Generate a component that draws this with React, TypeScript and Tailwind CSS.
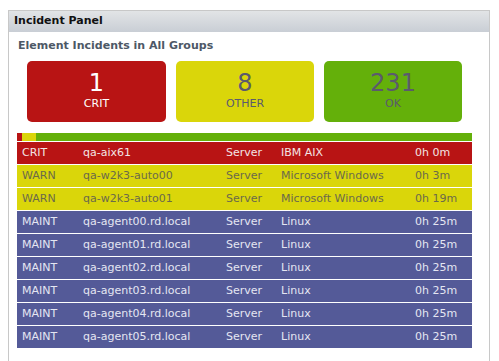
const rows = [
  { s: "CRIT", n: "qa-aix61", t: "Server", os: "IBM AIX", d: "0h 0m", c: "bg-[#b81414] text-[#f3e4e4]" },
  { s: "WARN", n: "qa-w2k3-auto00", t: "Server", os: "Microsoft Windows", d: "0h 3m", c: "bg-[#dad60a] text-[#6b6a4a]" },
  { s: "WARN", n: "qa-w2k3-auto01", t: "Server", os: "Microsoft Windows", d: "0h 19m", c: "bg-[#dad60a] text-[#6b6a4a]" },
  { s: "MAINT", n: "qa-agent00.rd.local", t: "Server", os: "Linux", d: "0h 25m", c: "bg-[#545a98] text-[#e4e6f2]" },
  { s: "MAINT", n: "qa-agent01.rd.local", t: "Server", os: "Linux", d: "0h 25m", c: "bg-[#545a98] text-[#e4e6f2]" },
  { s: "MAINT", n: "qa-agent02.rd.local", t: "Server", os: "Linux", d: "0h 25m", c: "bg-[#545a98] text-[#e4e6f2]" },
  { s: "MAINT", n: "qa-agent03.rd.local", t: "Server", os: "Linux", d: "0h 25m", c: "bg-[#545a98] text-[#e4e6f2]" },
  { s: "MAINT", n: "qa-agent04.rd.local", t: "Server", os: "Linux", d: "0h 25m", c: "bg-[#545a98] text-[#e4e6f2]" },
  { s: "MAINT", n: "qa-agent05.rd.local", t: "Server", os: "Linux", d: "0h 25m", c: "bg-[#545a98] text-[#e4e6f2]" },
]

const App = () => {
  return (
    <main className="h-[361px] overflow-hidden bg-white pt-[10px] pl-[8px] font-['DejaVu_Sans',Verdana,sans-serif]">
      <section className="w-[482px] h-[400px] border-x border-t border-[#c8c8c8]">
        {/* Header */}
        <div className="h-[21px] bg-gradient-to-b from-[#e2e4e6] to-[#c9ced5] pl-[5px] flex items-center text-[11px] font-bold text-[#111]">
          Incident Panel
        </div>

        <div className="pl-[8px]">
          <h2 className="mt-[8px] ml-[1px] h-[12px] leading-[12px] text-[11px] font-bold text-[#4d5866]">
            Element Incidents in All Groups
          </h2>

          {/* Cards */}
          <div className="mt-[9px] ml-[10px] flex gap-[10px]">
            <div className="w-[139px] h-[61px] rounded-[5px] bg-[#b81414] text-white flex flex-col items-center pt-[9px]">
              <span className="text-[24px] leading-[26px]">1</span>
              <span className="text-[11px] leading-[14px] mt-[1px]">CRIT</span>
            </div>
            <div className="w-[138px] h-[61px] rounded-[5px] bg-[#dad60a] text-[#5b5a6e] flex flex-col items-center pt-[9px]">
              <span className="text-[24px] leading-[26px]">8</span>
              <span className="text-[11px] leading-[14px] mt-[1px]">OTHER</span>
            </div>
            <div className="w-[138px] h-[61px] rounded-[5px] bg-[#64b00a] text-[#5b5a6e] flex flex-col items-center pt-[9px]">
              <span className="text-[24px] leading-[26px]">231</span>
              <span className="text-[11px] leading-[14px] mt-[1px]">OK</span>
            </div>
          </div>

          {/* Summary bar */}
          <div className="mt-[11px] w-[455px] h-[8px] flex">
            <div className="w-[5px] bg-[#b81414]" />
            <div className="w-[14px] bg-[#dad60a]" />
            <div className="flex-1 bg-[#64b00a]" />
          </div>

          {/* Rows */}
          <div className="mt-[1px] w-[455px] flex flex-col gap-[1px] text-[11px]">
            {rows.map((r, i) => (
              <div key={i} className={`h-[22px] flex items-center ${r.c}`}>
                <span className="w-[66px] pl-[5px]">{r.s}</span>
                <span className="w-[143px]">{r.n}</span>
                <span className="w-[55px]">{r.t}</span>
                <span className="w-[134px]">{r.os}</span>
                <span>{r.d}</span>
              </div>
            ))}
          </div>
        </div>
      </section>
    </main>
  )
}

export default App
